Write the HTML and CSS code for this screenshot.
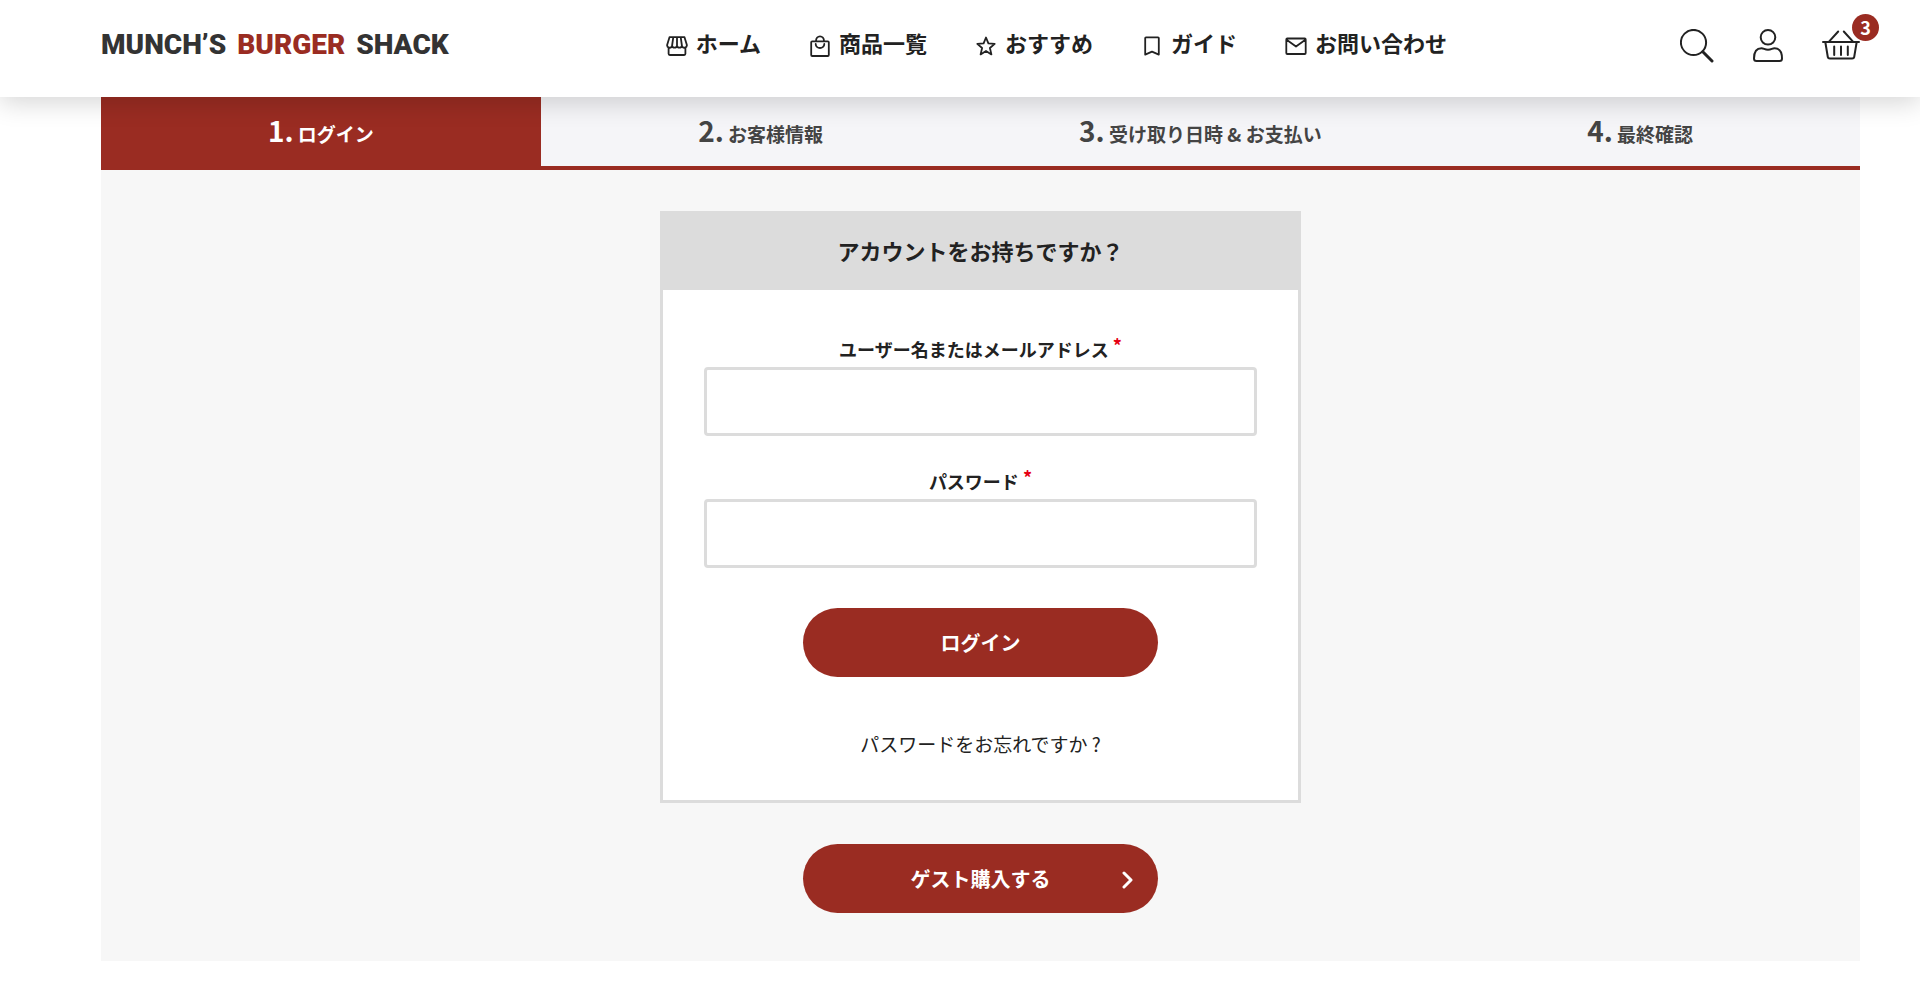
FILE: index.html
```html
<!DOCTYPE html>
<html lang="ja">
<head>
  <meta charset="UTF-8">
  <meta name="viewport" content="width=device-width, initial-scale=1.0">
  <title>ログイン | MUNCH’S BURGER SHACK</title>
  <link rel="stylesheet" href="styles.css">
</head>
<body>
  <header class="header">
    <a class="logo" href="#"><span>MUNCH’S</span><span class="logo-red">BURGER</span><span>SHACK</span></a>

    <nav class="nav">
      <a href="#">
        <svg class="nav-icon" viewBox="0 0 22 22">
          <path d="M3.500 2.200h15l2.300 7.500a2.400 2.400 0 0 1-4.900 1a2.500 2.500 0 0 1-4.900 0a2.500 2.500 0 0 1-4.900 0a2.400 2.400 0 0 1-4.900-1zM7.300 2.200L6.100 10.500M11 2.200V10.500M14.700 2.200l1.200 8.300M2.600 13v5.800q0 1.200 1.200 1.200h14.400q1.200 0 1.200-1.200V13"/>
        </svg>
        <span>ホーム</span>
      </a>
      <a href="#">
        <svg class="nav-icon" viewBox="0 0 22 22">
          <path d="M3.200 6.300h15.600q1 0 1 1v12.700q0 1-1 1H3.200q-1 0-1-1V7.300q0-1 1-1zM7 6a4 4.700 0 0 1 8 0M6.700 9a4.300 4 0 0 0 8.600 0"/>
        </svg>
        <span>商品一覧</span>
      </a>
      <a href="#">
        <svg class="nav-icon" viewBox="0 0 22 22">
          <path d="M11 2.500l2.400 5.900 6.300.5-4.800 4.100 1.500 6.400L11 16.000l-5.400 3.400 1.500-6.400-4.800-4.100 6.300-.5z"/>
        </svg>
        <span>おすすめ</span>
      </a>
      <a href="#">
        <svg class="nav-icon" viewBox="0 0 22 22">
          <path d="M5 2.300h12q.8 0 .8.800v16.500L11 16.600l-6.800 3v-16.500q0-.8.800-.8z"/>
        </svg>
        <span>ガイド</span>
      </a>
      <a href="#">
        <svg class="nav-icon" viewBox="0 0 22 22">
          <path d="M2.300 3.500h17.400q1 0 1 1v13.500q0 1-1 1H2.300q-1 0-1-1V4.500q0-1 1-1zM1.600 4.700l9.400 6.800L20.400 4.700"/>
        </svg>
        <span>お問い合わせ</span>
      </a>
    </nav>

    <div class="actions">
      <a href="#" aria-label="検索">
        <svg class="action-icon" viewBox="0 0 34 34">
          <circle cx="13.500" cy="13.500" r="12.600"/>
          <path class="handle" d="M22.800 22.800l9.200 9.200"/>
        </svg>
      </a>
      <a href="#" aria-label="アカウント">
        <svg class="action-icon" viewBox="0 0 34 34">
          <circle cx="17" cy="8.300" r="7.300"/>
          <path d="M10.500 19.300c2.500 0 3 1.400 6.500 1.400s4-1.400 6.500-1.400c5 0 7.500 4 7.500 10.200q0 2.500-2.500 2.500h-23Q3 32 3 29.500C3 23.300 5.500 19.300 10.500 19.300z"/>
        </svg>
      </a>
      <a class="cart" href="#" aria-label="カート">
        <svg class="cart-icon" viewBox="0 0 38 34">
          <path d="M1 13h36M3.300 13l2.500 15q.3 1.600 2 1.600h22.400q1.700 0 2-1.600l2.500-15M7 12.700L16.200 2.500M31 12.700L21.800 2.500M12.200 17.500v8.500M19 17.500v8.500M25.800 17.500v8.500"/>
        </svg>
        <span class="badge">3</span>
      </a>
    </div>
  </header>

  <main class="main">
    <ol class="steps">
      <li class="active"><span class="num">1.</span> ログイン</li>
      <li><span class="num">2.</span> お客様情報</li>
      <li><span class="num">3.</span> 受け取り日時 &amp; お支払い</li>
      <li><span class="num">4.</span> 最終確認</li>
    </ol>

    <div class="panel">
      <section class="card">
        <h1 class="card-title">アカウントをお持ちですか？</h1>
        <form class="login">
          <label for="username">ユーザー名またはメールアドレス <span class="required">*</span></label>
          <input type="text" id="username" name="username">
          <label for="password">パスワード <span class="required">*</span></label>
          <input type="password" id="password" name="password">
          <button type="submit" class="btn">ログイン</button>
          <a class="forgot" href="#">パスワードをお忘れですか ?</a>
        </form>
      </section>
      <button type="button" class="btn btn-guest">
        ゲスト購入する
        <svg class="arrow" viewBox="0 0 12 18"><path d="M2 2l7 7-7 7"/></svg>
      </button>
    </div>
  </main>
</body>
</html>
```

FILE: styles.css
```css
* {
  box-sizing: border-box;
}
body {
  margin: 0;
  background-color: #fff;
  color: #222;
  font-family: "Noto Sans CJK JP", sans-serif;
}
a {
  color: inherit;
  text-decoration: none;
}
svg {
  display: block;
  fill: none;
  stroke: currentColor;
  stroke-linecap: round;
  stroke-linejoin: round;
}

/* header */
.header {
  position: relative;
  z-index: 1;
  display: flex;
  justify-content: space-between;
  align-items: center;
  height: 97px;
  padding: 0 60px 5px 101px;
  background-color: #fff;
  box-shadow: 0 6px 24px rgba(0, 0, 0, 0.16);
}
.logo {
  display: flex;
  gap: 11px;
  padding-bottom: 4px;
  color: #333;
  font-family: Roboto, "Liberation Sans", sans-serif;
  font-size: 28px;
  font-weight: 900;
}
.logo-red {
  color: #9a2c22;
}
.nav {
  display: flex;
  gap: 48px;
}
.nav a {
  display: flex;
  align-items: center;
  gap: 8px;
  font-size: 22px;
  line-height: 32px;
  font-weight: bold;
  white-space: nowrap;
}
.nav span {
  padding-bottom: 8px;
}
.nav-icon {
  width: 22px;
  height: 22px;
  stroke-width: 1.8;
}
.actions {
  display: flex;
  align-items: center;
  gap: 37px;
  margin-left: 16px;
}
.action-icon {
  width: 34px;
  height: 34px;
  stroke-width: 2;
}
.handle {
  stroke-width: 3;
}
.cart {
  position: relative;
}
.cart-icon {
  width: 38px;
  height: 34px;
  stroke-width: 2;
}
.badge {
  position: absolute;
  top: -15px;
  right: -19px;
  width: 27px;
  height: 27px;
  border-radius: 50%;
  background-color: #9a2c22;
  color: #fff;
  font-size: 18px;
  font-weight: bold;
  line-height: 27px;
  text-align: center;
}

/* steps */
.main {
  margin: 0 60px 0 101px;
}
.steps {
  display: grid;
  grid-template-columns: repeat(4, 1fr);
  margin: 0;
  padding: 0;
  list-style: none;
  background-color: #f5f5f8;
  border-bottom: 4px solid #9a2c22;
}
.steps li {
  height: 69px;
  color: #444;
  font-size: 19px;
  font-weight: bold;
  line-height: 66px;
  text-align: center;
}
.steps .active {
  background-color: #9a2c22;
  color: #fff;
}
.num {
  font-size: 28px;
}

/* login */
.panel {
  display: flex;
  flex-direction: column;
  align-items: center;
  padding: 41px 20px 48px;
  background-color: #f7f7f7;
}
.card {
  width: 100%;
  max-width: 641px;
  background-color: #fff;
  border: 3px solid #dcdcdc;
}
.card-title {
  margin: 0;
  padding: 18px 0 22px;
  background-color: #dcdcdc;
  font-size: 22px;
  line-height: 36px;
  text-align: center;
}
.login {
  display: flex;
  flex-direction: column;
  align-items: center;
  padding: 45px 41px 42px;
}
.login label {
  margin-bottom: 4px;
  font-size: 18px;
  font-weight: bold;
  line-height: 28px;
}
.required {
  color: #e60012;
  line-height: 1;
  vertical-align: 4px;
}
.login input {
  width: 100%;
  height: 69px;
  margin-bottom: 31px;
  padding: 0 16px;
  border: 3px solid #dcdcdc;
  border-radius: 4px;
  background-color: #fff;
  font-family: inherit;
  font-size: 18px;
}
.btn {
  width: 355px;
  max-width: 100%;
  height: 69px;
  border: none;
  border-radius: 35px;
  background-color: #9a2c22;
  color: #fff;
  font-family: inherit;
  font-size: 20px;
  font-weight: bold;
  cursor: pointer;
}
.btn:hover {
  background-color: #842319;
}
.login .btn {
  margin-top: 9px;
}
.forgot {
  margin-top: 53px;
  font-size: 19px;
  line-height: 28px;
}
.btn-guest {
  position: relative;
  margin-top: 41px;
}
.arrow {
  position: absolute;
  top: 27px;
  right: 24px;
  width: 12px;
  height: 18px;
  stroke-width: 3;
}
```
